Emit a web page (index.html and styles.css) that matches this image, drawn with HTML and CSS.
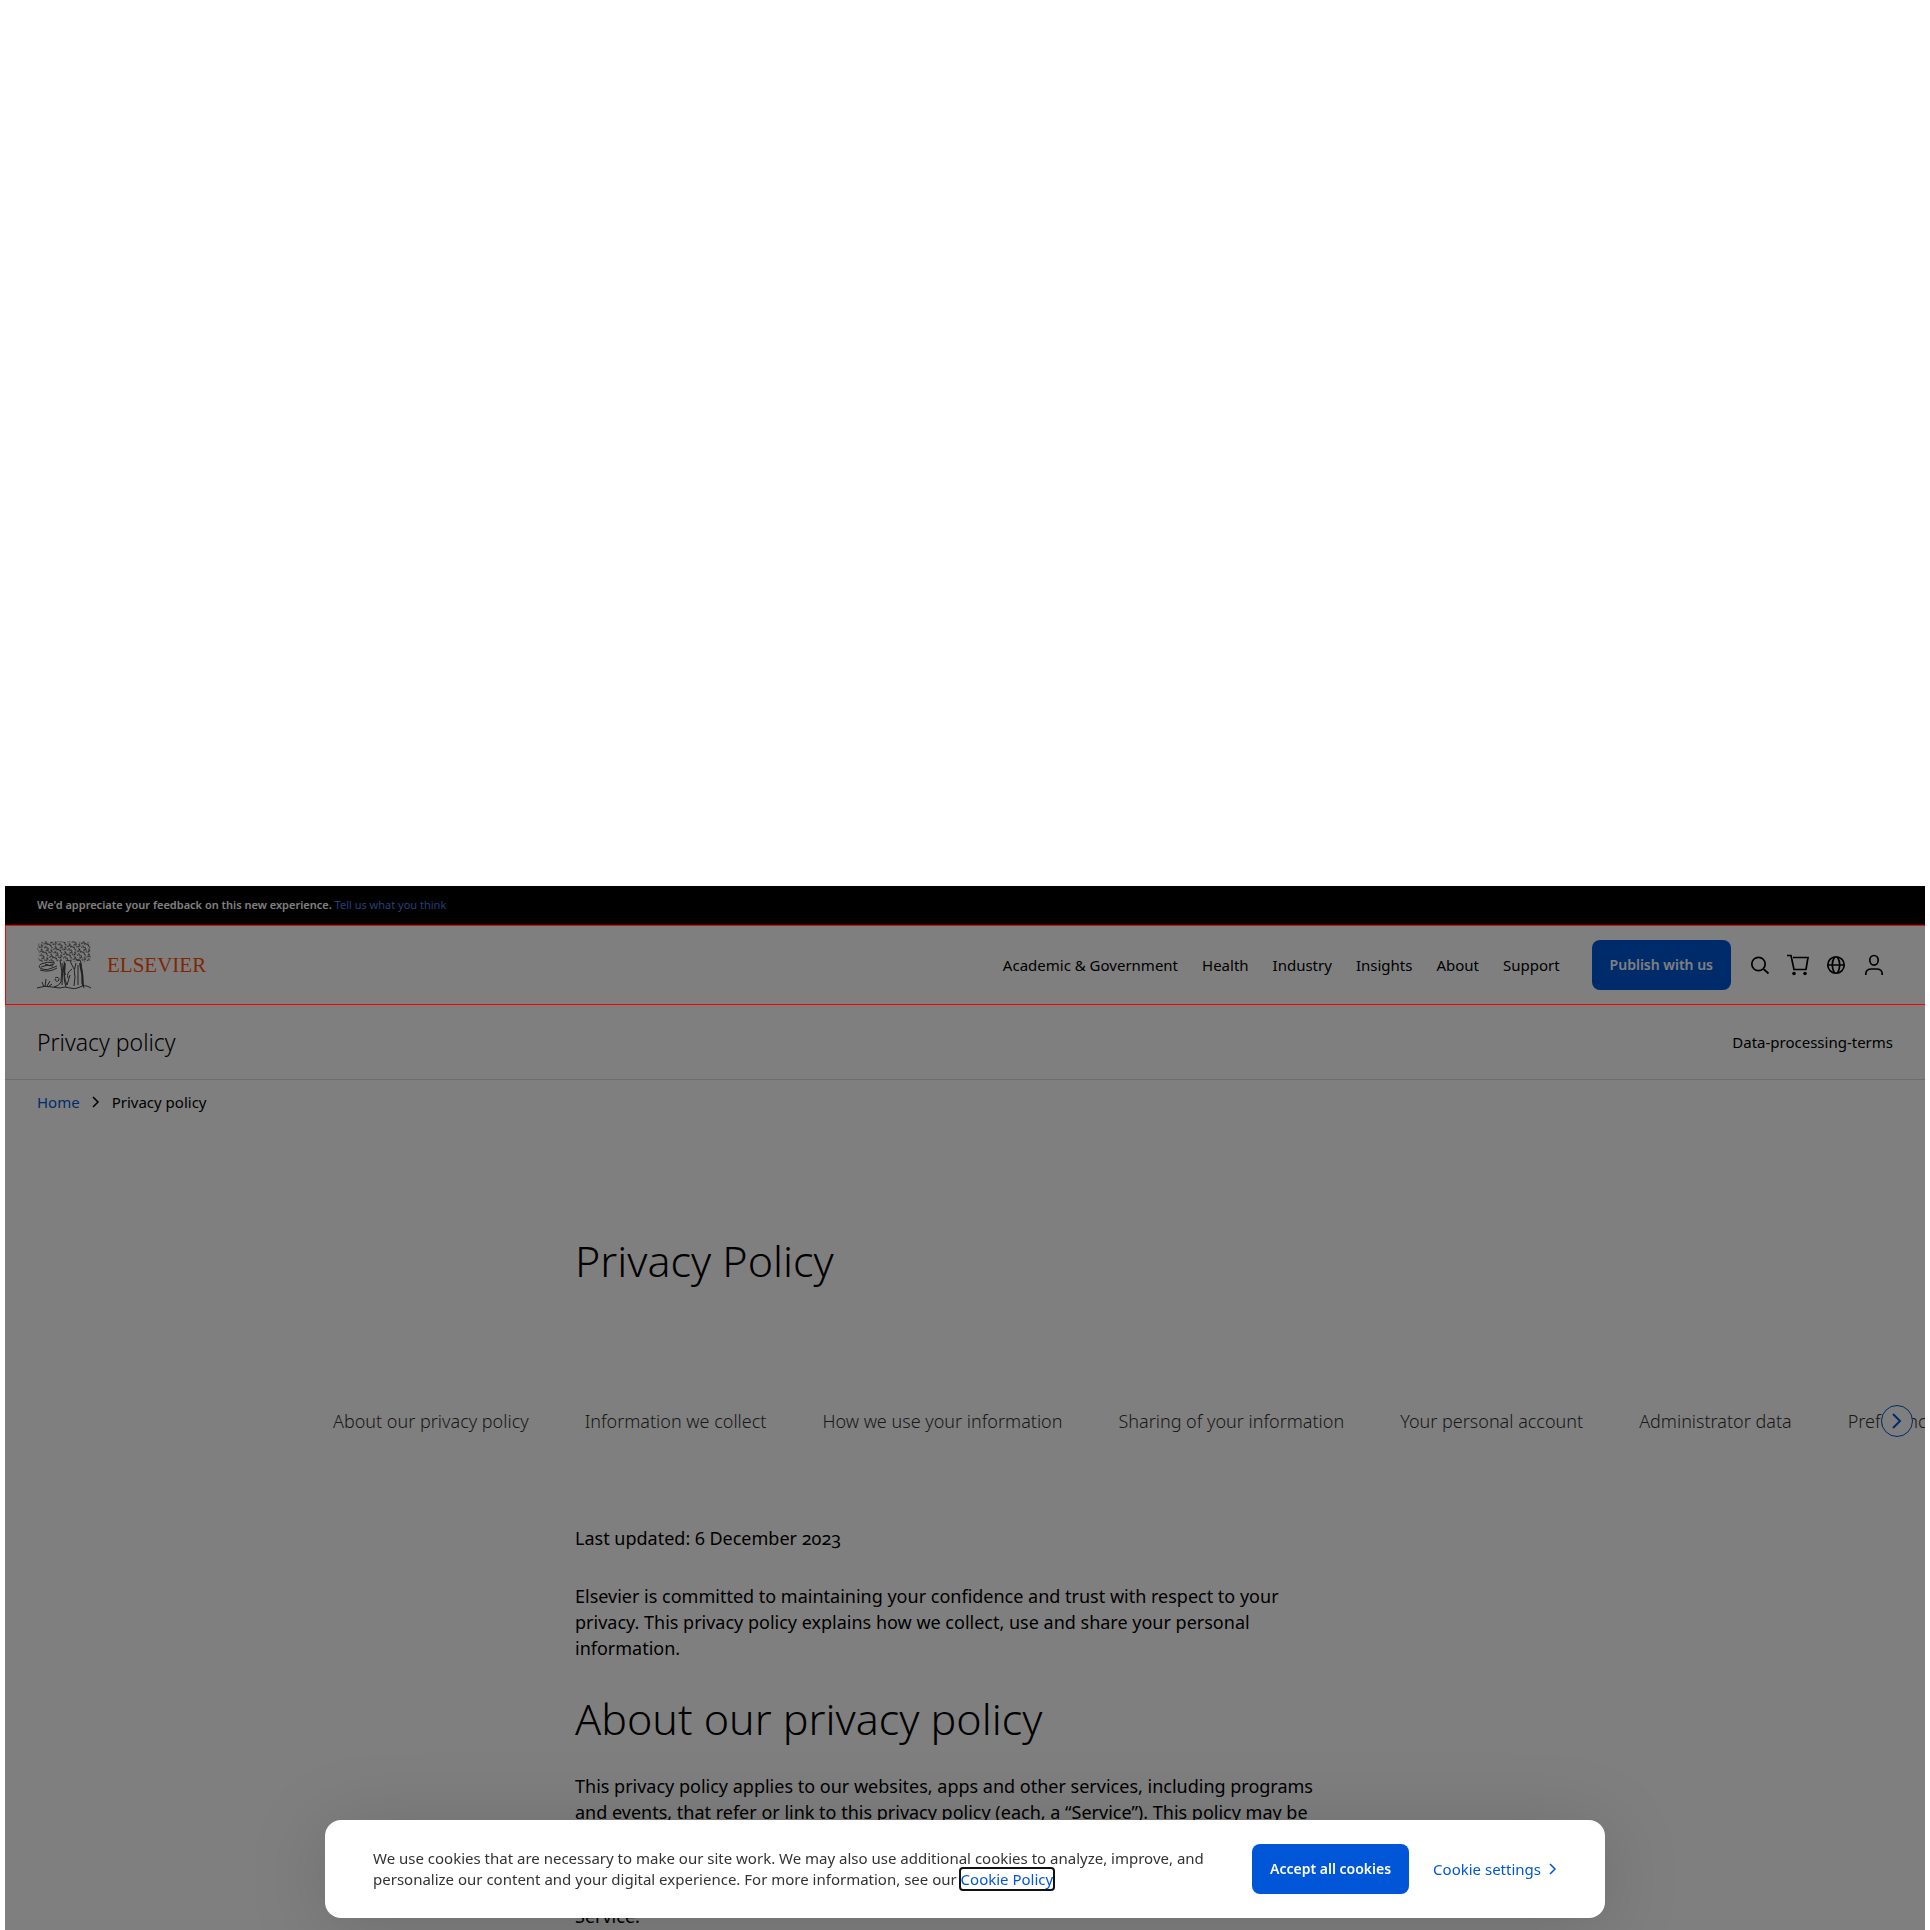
FILE: index.html
```html
<!DOCTYPE html>
<html lang="en">
<head>
<meta charset="utf-8">
<title>Privacy policy | Elsevier</title>
<link rel="stylesheet" href="styles.css">
</head>
<body>
<div class="site">
  <div class="feedback"><strong>We'd appreciate your feedback on this new experience.</strong> <a href="#">Tell us what you think</a></div>
  <header class="header">
    <a class="brand" href="#">
      <svg class="tree" viewBox="0 0 54 48" aria-hidden="true" fill="none">
        <defs>
          <pattern id="leaves" width="11" height="9" patternUnits="userSpaceOnUse" patternTransform="rotate(28)">
            <path d="M0 2q2-2 3 0t-2 2M5 1q3 0 2 2t-3 1M9 3q2-1 1-3M0 7q2-2 4 0M3 6q1 2 3 2M7 5q3 0 2 2t-2 1M10 6l1 2" fill="none" stroke="#333" stroke-width="1"/>
          </pattern>
        </defs>
        <path d="M2 2l5-2 6 1 7-1 8 1 8-1 7 1 6-1 4 2 1 5-1 6 1 6-6 2-6-1-6 1-6-2-6 1-8 1-7-1-6 1-2-4 1-5-2-5z" fill="url(#leaves)" stroke="none"/>
        <path d="M18 22q-8-2-14 1-4 3 1 5 5 2 10-1l5-2M4 26q6-3 12-1M3 29q9 3 17-2M8 23q4 3 9 0"/>
        <path d="M23 19q3 12 1 22-2 4-7 5M27 20q2 8 0 14 0 6 2 12M25 22q1 10 0 22"/>
        <path d="M29 20q4-2 5 2l3 6M28 24q-2 12 2 20M35 28q-6 4-4 9M40 20q3-3 4 2 2 10 1 20l2 5M39 22q-3 8-1 14l-1 9M41 24v20M33 34l-3 10"/>
        <path d="M43 22q3 12 3 23M28 22q-2 6 0 12" stroke-width="2"/>
        <path d="M0 47q8-3 15-1l8 1q5-2 10 0t10-1 11 1M7 46l-2-5M8 46l1-8M10 45l3-5M11 46l4-3M18 37q4-2 4 2-3 3-4-1"/>
      </svg>
      <span class="wordmark">ELSEVIER</span>
    </a>
    <nav class="nav" aria-label="Main">
      <a href="#">Academic &amp; Government</a><a href="#">Health</a><a href="#">Industry</a><a href="#">Insights</a><a href="#">About</a><a href="#">Support</a>
    </nav>
    <button class="btn publish" type="button">Publish with us</button>
    <div class="tools">
      <button type="button" aria-label="Search"><svg viewBox="0 0 24 24"><circle cx="10.5" cy="11" r="6.7"/><path d="M15.5 16l5 4.500"/></svg></button>
      <button type="button" aria-label="Cart"><svg viewBox="0 0 24 24"><path d="M1 2.500h4l3 14h12l2-12H7"/><circle class="dot" cx="8" cy="20.500" r="1.800"/><circle class="dot" cx="19" cy="20.500" r="1.800"/></svg></button>
      <button type="button" aria-label="Language"><svg viewBox="0 0 24 24"><circle cx="12" cy="12" r="8.200"/><path d="M10.500 4q-4.500 8 0 16M13.500 4q4.500 8 0 16M4 12h16"/></svg></button>
      <button type="button" aria-label="Account"><svg viewBox="0 0 24 24"><ellipse cx="12" cy="7.300" rx="4.200" ry="4.800"/><path d="M3.800 22v-1q0-5 6-5h4.400q6 0 6 5v1"/></svg></button>
    </div>
  </header>
  <div class="subbar"><span class="subtitle">Privacy policy</span><a href="#">Data-processing-terms</a></div>
  <nav class="crumbs" aria-label="Breadcrumb">
    <a href="#">Home</a>
    <svg viewBox="0 0 8 12" aria-hidden="true"><path d="M1 1l5 5-5 5"/></svg>
    <span>Privacy policy</span>
  </nav>
  <main>
    <h1 class="column">Privacy Policy</h1>
    <nav class="sections" aria-label="Sections">
      <a href="#">About our privacy policy</a><a href="#">Information we collect</a><a href="#">How we use your information</a><a href="#">Sharing of your information</a><a href="#">Your personal account</a><a href="#">Administrator data</a><a href="#">Preferences</a>
      <button class="next" type="button" aria-label="Next"><svg viewBox="0 0 10 16"><path d="M1 1l7 7-7 7"/></svg></button>
    </nav>
    <article class="column">
      <p>Last updated: 6 December 2023</p>
      <p>Elsevier is committed to maintaining your confidence and trust with respect to your<br>privacy. This privacy policy explains how we collect, use and share your personal<br>information.</p>
      <h2>About our privacy policy</h2>
      <p>This privacy policy applies to our websites, apps and other services, including programs<br>and events, that refer or link to this privacy policy (each, a “Service”). This policy may be<br>supplemented by additional privacy statements, terms or notices provided to you.<br>The Elsevier company that owns or administers the Service is the primary<br>controller of your personal information provided to, or collected by or for, the<br>Service.</p>
    </article>
  </main>
  <div class="overlay"></div>
</div>
<section class="cookies" aria-label="Cookies">
  <p>We use cookies that are necessary to make our site work. We may also use additional cookies to analyze, improve, and<br>personalize our content and your digital experience. For more information, see our <a href="#">Cookie Policy</a></p>
  <button class="btn" type="button">Accept all cookies</button>
  <button class="settings" type="button">Cookie settings <svg viewBox="0 0 8 12" aria-hidden="true"><path d="M1 1l5 5-5 5"/></svg></button>
</section>
</body>
</html>
```
FILE: styles.css
```css
* { box-sizing: border-box; }
body {
  margin: 0;
  padding: 886px 5px 0;
  height: 100vh;
  overflow: hidden;
  display: flex;
  flex-direction: column;
  background: #fff;
  color: #000;
  font: 15px/24px "Noto Sans", sans-serif;
}
a { color: inherit; text-decoration: none; }
button { font: inherit; color: inherit; border: 0; background: none; padding: 0; }
svg { display: block; fill: none; stroke: currentColor; }
h1, h2, p { margin: 0; }

.site { position: relative; flex: 1; min-height: 0; overflow: hidden; }
.overlay { position: absolute; inset: 0; background: rgba(0, 0, 0, .5); }

.feedback {
  height: 39px;
  padding: 0 32px;
  background: #000;
  color: #fff;
  font-size: 11px;
  line-height: 38px;
}
.feedback strong { font-weight: 600; }
.feedback a { color: #4d7fe8; }

.header {
  position: relative;
  display: flex;
  align-items: center;
  height: 80px;
  padding: 0 32px;
}
.header::after {
  content: "";
  position: absolute;
  inset: 0;
  z-index: 2;
  border: 1px solid #f00;
  border-right: 0;
  pointer-events: none;
}
.brand { display: flex; align-items: center; gap: 16px; margin-right: auto; }
.tree { width: 54px; height: 48px; stroke: #444; }
.wordmark { color: #ff4f08; font: 21px/24px "Liberation Serif", serif; }
.nav { display: flex; gap: 24px; margin-right: 32px; }
.btn {
  height: 50px;
  padding: 0 18px;
  border-radius: 8px;
  background: #0056d6;
  color: #fff;
  font-size: 14px;
  font-weight: 600;
  white-space: nowrap;
}
.publish { margin-right: 10px; }
.tools { display: flex; }
.tools button { width: 38px; height: 38px; display: grid; place-items: center; }
.tools svg { width: 24px; height: 24px; stroke-width: 1.7; }
.tools .dot { fill: currentColor; stroke: none; }

.subbar {
  display: flex;
  align-items: center;
  justify-content: space-between;
  height: 75px;
  padding: 0 32px;
  border-bottom: 1px solid #dcdcdc;
}
.subtitle { font-size: 23px; font-weight: 300; }
.crumbs { display: flex; align-items: center; gap: 12px; padding: 10px 32px; }
.crumbs a { color: #0056d6; }
.crumbs svg, .settings svg { width: 8px; height: 12px; stroke-width: 1.5; }

.column { width: 780px; margin: 0 auto; }
h1, h2 { font-size: 43px; line-height: 52px; font-weight: 300; }
h1.column { margin-top: 111px; }
.sections {
  position: relative;
  display: flex;
  gap: 56px;
  margin-top: 118px;
  padding-left: 328px;
  font-size: 18px;
  font-weight: 300;
  line-height: 32px;
  white-space: nowrap;
  color: #333;
}
.next {
  position: absolute;
  right: 12px;
  top: 0;
  width: 32px;
  height: 32px;
  display: grid;
  place-items: center;
  border: 1px solid #0056d6;
  border-radius: 50%;
  background: #fff;
  color: #0056d6;
}
.next svg { width: 10px; height: 16px; stroke-width: 2; }
article { padding-top: 88px; font-size: 18px; line-height: 26px; font-variant-numeric: oldstyle-nums; }
article p { margin-bottom: 32px; white-space: nowrap; }
article h2 { margin-bottom: 28px; }

.cookies {
  position: fixed;
  left: 50%;
  bottom: 12px;
  width: 1280px;
  max-width: 100%;
  transform: translateX(-50%);
  display: flex;
  align-items: center;
  padding: 24px 48px;
  border-radius: 16px;
  background: #fff;
  box-shadow: 0 8px 80px rgba(0, 0, 0, .15);
}
.cookies p { margin-right: auto; color: #333; line-height: 21px; }
.cookies p a { color: #0056d6; outline: 2px solid #111; border-radius: 2px; }
.settings { display: flex; align-items: center; gap: 8px; margin-left: 24px; color: #0056d6; white-space: nowrap; }
```
